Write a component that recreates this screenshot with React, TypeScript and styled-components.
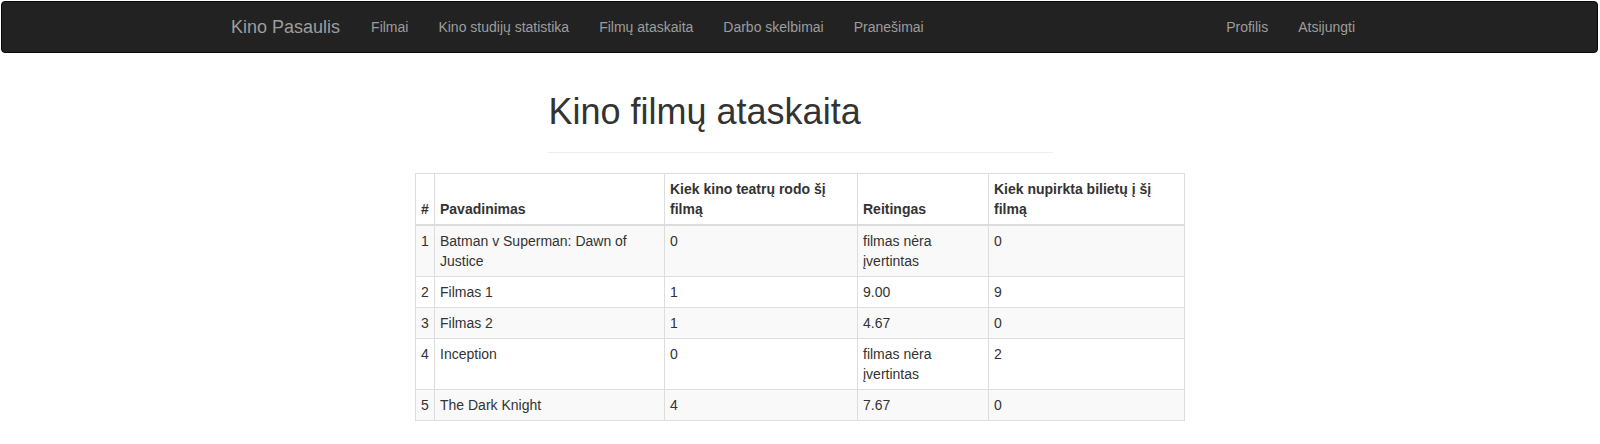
import styled, {createGlobalStyle} from 'styled-components';

type Film = {
    id: number,
    title: string,
    theaters: number,
    rating: string,
    tickets: number
}

const films: Film[] = [
    {id: 1, title: "Batman v Superman: Dawn of Justice", theaters: 0, rating: "filmas nėra įvertintas", tickets: 0},
    {id: 2, title: "Filmas 1", theaters: 1, rating: "9.00", tickets: 9},
    {id: 3, title: "Filmas 2", theaters: 1, rating: "4.67", tickets: 0},
    {id: 4, title: "Inception", theaters: 0, rating: "filmas nėra įvertintas", tickets: 2},
    {id: 5, title: "The Dark Knight", theaters: 4, rating: "7.67", tickets: 0},
];

const leftLinks = ["Filmai", "Kino studijų statistika", "Filmų ataskaita", "Darbo skelbimai", "Pranešimai"];
const rightLinks = ["Profilis", "Atsijungti"];

const columnWidths = [19, 230, 193, 131, 196];

export default function App() {
    return (
        <>
            <GlobalStyle/>
            <Navbar>
                <NavInner>
                    <NavGroup>
                        <Brand href="#">Kino Pasaulis</Brand>
                        {leftLinks.map(link => <NavLink key={link} href="#">{link}</NavLink>)}
                    </NavGroup>
                    <NavGroup>
                        {rightLinks.map(link => <NavLink key={link} href="#">{link}</NavLink>)}
                    </NavGroup>
                </NavInner>
            </Navbar>

            <Main>
                <PageHeader>
                    <Title>Kino filmų ataskaita</Title>
                </PageHeader>

                <ReportTable>
                    <colgroup>
                        {columnWidths.map((w, i) => <col key={i} style={{width: w}}/>)}
                    </colgroup>
                    <thead>
                    <tr>
                        <HeadCell>#</HeadCell>
                        <HeadCell>Pavadinimas</HeadCell>
                        <HeadCell>Kiek kino teatrų rodo šį filmą</HeadCell>
                        <HeadCell>Reitingas</HeadCell>
                        <HeadCell>Kiek nupirkta bilietų į šį filmą</HeadCell>
                    </tr>
                    </thead>
                    <tbody>
                    {films.map((film, index) => (
                        <StripedRow key={film.id} striped={index % 2 === 0}>
                            <Cell>{film.id}</Cell>
                            <Cell>{film.title}</Cell>
                            <Cell>{film.theaters}</Cell>
                            <Cell>{film.rating}</Cell>
                            <Cell>{film.tickets}</Cell>
                        </StripedRow>
                    ))}
                    </tbody>
                </ReportTable>
            </Main>
        </>
    );
}

const GlobalStyle = createGlobalStyle`
  body {
    margin: 0;
    background: #fff;
    font-family: "Liberation Sans", Arial, Helvetica, sans-serif;
    font-size: 14px;
    line-height: 1.42857143;
    color: #333;
  }
  * {
    box-sizing: border-box;
  }
`;

const Navbar = styled.nav`
  margin: 1px 2px 0 1px;
  min-height: 52px;
  background-color: #222;
  border: 1px solid #080808;
  border-radius: 4px;
`;

const NavInner = styled.div`
  display: flex;
  justify-content: space-between;
  width: 1154px;
  margin-left: 214px;
`;

const NavGroup = styled.div`
  display: flex;
`;

const Brand = styled.a`
  padding: 15px 16px 15px 15px;
  height: 50px;
  font-size: 18px;
  line-height: 20px;
  color: #9d9d9d;
  text-decoration: none;
`;

const NavLink = styled.a`
  padding: 15px;
  line-height: 20px;
  color: #9d9d9d;
  text-decoration: none;
`;

const Main = styled.main`
  padding-top: 39px;
`;

const PageHeader = styled.div`
  width: 505px;
  margin: 0 auto 20px;
  padding-bottom: 20px;
  border-bottom: 1px solid #eee;
`;

const Title = styled.h1`
  margin: 0;
  padding-left: 1px;
  font-size: 36px;
  font-weight: 500;
  line-height: 1.1;
  color: #333;
`;

const ReportTable = styled.table`
  width: 769px;
  margin: 0 auto;
  table-layout: fixed;
  border-collapse: collapse;
  border-spacing: 0;
  border: 1px solid #ddd;
`;

const HeadCell = styled.th`
  padding: 5px;
  text-align: left;
  vertical-align: bottom;
  font-weight: bold;
  line-height: 20px;
  border: 1px solid #ddd;
  border-bottom: 2px solid #ddd;
`;

const StripedRow = styled.tr<{ striped: boolean }>`
  background-color: ${(props) => (props.striped ? '#f9f9f9' : 'transparent')};
`;

const Cell = styled.td`
  padding: 5px;
  vertical-align: top;
  line-height: 20px;
  border: 1px solid #ddd;
`;
